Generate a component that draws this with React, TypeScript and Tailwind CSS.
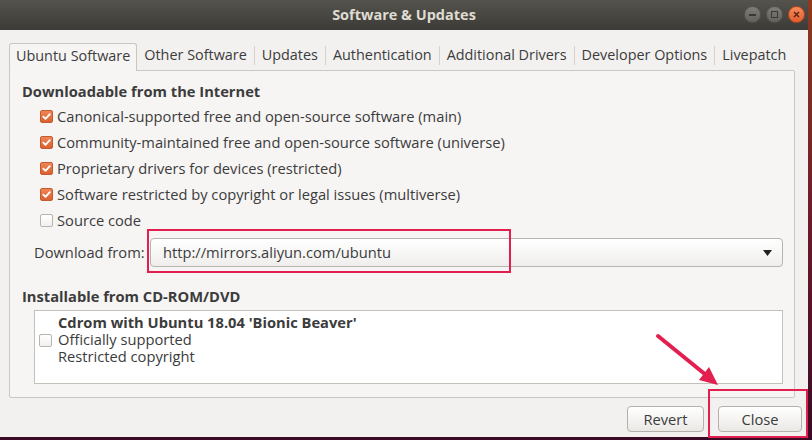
const font = "font-['Open_Sans',sans-serif]";

function CheckBox({ checked }: { checked: boolean }) {
  if (checked) {
    return (
      <span className="flex h-[13px] w-[13px] shrink-0 items-center justify-center rounded-[2px] border border-[#c55a2c] bg-gradient-to-b from-[#ee8556] to-[#d9612f]">
        <svg width="9" height="9" viewBox="0 0 9 9">
          <path d="M1.3 4.6 L3.5 6.8 L7.8 2.2" fill="none" stroke="#fff" strokeWidth="1.8" strokeLinecap="round" strokeLinejoin="round" />
        </svg>
      </span>
    );
  }
  return <span className="h-[13px] w-[13px] shrink-0 rounded-[2px] border border-[#b8b4ae] bg-gradient-to-b from-white to-[#f1f0ee]" />;
}

const sources = [
  { label: 'Canonical-supported free and open-source software (main)', checked: true },
  { label: 'Community-maintained free and open-source software (universe)', checked: true },
  { label: 'Proprietary drivers for devices (restricted)', checked: true },
  { label: 'Software restricted by copyright or legal issues (multiverse)', checked: true },
  { label: 'Source code', checked: false },
];

const tabs = ['Other Software', 'Updates', 'Authentication', 'Additional Drivers', 'Developer Options', 'Livepatch'];

export default function App() {
  return (
    <div className={`relative h-[440px] w-[812px] overflow-hidden bg-gradient-to-b from-[#8d3a1d] via-[#6c1a2a] to-[#3a0a25] text-[14.7px] text-[#3c3c3c] ${font}`}>
      <div className="flex h-[437px] w-[808px] flex-col">
        {/* title bar */}
        <div className="relative flex h-[30px] items-center justify-center bg-gradient-to-b from-[#55534d] to-[#3c3b37]">
          <span className="text-[14.5px] font-bold text-[#dfdbd2]">Software &amp; Updates</span>
          <div className="absolute right-[3px] top-[6px] flex items-center gap-[5px]">
            <span className="flex h-[17px] w-[17px] items-center justify-center rounded-full border border-[#55544f] bg-gradient-to-b from-[#7e7d78] to-[#62615c]">
              <span className="h-[2px] w-[7px] bg-[#3a3935]" />
            </span>
            <span className="flex h-[17px] w-[17px] items-center justify-center rounded-full border border-[#55544f] bg-gradient-to-b from-[#7e7d78] to-[#62615c]">
              <span className="h-[7px] w-[7px] border border-[#3a3935]" />
            </span>
            <span className="flex h-[17px] w-[17px] items-center justify-center rounded-full border border-[#b9461d] bg-gradient-to-b from-[#f58a5c] to-[#e35d2c]">
              <svg width="7" height="7" viewBox="0 0 7 7">
                <path d="M1 1 L6 6 M6 1 L1 6" stroke="#5a2210" strokeWidth="1.4" />
              </svg>
            </span>
          </div>
        </div>

        {/* body */}
        <div className="flex flex-1 flex-col bg-[#f2f1f0] pl-[9px] pr-[13px] pt-[13px]">
          {/* tabs */}
          <div className="relative z-10 flex h-[27px] items-stretch whitespace-nowrap text-[14.4px]">
            <div className="-mb-px flex shrink-0 items-center rounded-t-[3px] border border-b-0 border-[#c9c5bf] bg-[#f6f5f4] px-[6px] pb-[3px]">
              Ubuntu Software
            </div>
            {tabs.map((t, i) => (
              <div key={t} className="flex shrink-0 items-center pb-[3px]">
                {i > 0 && <span className="h-[19px] w-px bg-[#d4d1cc]" />}
                <span className="px-[7px]">{t}</span>
              </div>
            ))}
          </div>

          {/* panel */}
          <div className="flex h-[328px] flex-col rounded-[2px] border border-[#cbc7c1] bg-[#f6f5f4] pl-[12px] pr-[11px] pt-[10px]">
            <div className="h-[20px] font-bold leading-[20px]">Downloadable from the Internet</div>
            <div className="mt-[2px] flex flex-col pl-[18px]">
              {sources.map((s) => (
                <div key={s.label} className="flex h-[26px] items-center gap-[4px]">
                  <CheckBox checked={s.checked} />
                  <span>{s.label}</span>
                </div>
              ))}
            </div>
            <div className="mt-[5px] flex items-center pl-[12px]">
              <span className="w-[116px]">Download from:</span>
              <div className="flex h-[29px] flex-1 items-center justify-between rounded-[4px] border border-[#b9b5ae] bg-gradient-to-b from-white to-[#efeeec] pl-[12px] pr-[10px]">
                <span>http://mirrors.aliyun.com/ubuntu</span>
                <svg width="9" height="6" viewBox="0 0 9 6">
                  <path d="M0 0 L9 0 L4.5 6 Z" fill="#222" />
                </svg>
              </div>
            </div>
            <div className="mt-[19px] h-[20px] font-bold leading-[20px]">Installable from CD-ROM/DVD</div>
            <div className="ml-[12px] mt-[4px] flex h-[74px] items-start border border-[#c4c0ba] bg-white pl-[4px] pt-[3px]">
              <div className="flex h-[52px] items-center">
                <CheckBox checked={false} />
              </div>
              <div className="ml-[6px] flex flex-col leading-[17px]">
                <span className="font-bold">Cdrom with Ubuntu 18.04 'Bionic Beaver'</span>
                <span>Officially supported</span>
                <span>Restricted copyright</span>
              </div>
            </div>
          </div>

          {/* buttons */}
          <div className="mt-[8px] flex justify-end gap-[14px]">
            <button className="h-[26px] w-[77px] rounded-[4px] border border-[#b5b0a9] bg-gradient-to-b from-white to-[#ebe9e6] text-[#3c3c3c]">
              Revert
            </button>
            <button className="-mr-[7px] h-[26px] w-[84px] rounded-[4px] border border-[#b5b0a9] bg-gradient-to-b from-white to-[#ebe9e6] text-[#3c3c3c]">
              Close
            </button>
          </div>
        </div>
      </div>

      {/* annotations */}
      <div className="absolute left-[147px] top-[229px] h-[44px] w-[364px] border-2 border-[#e21f4e]" />
      <div className="absolute left-[708px] top-[389px] h-[49px] w-[100px] border-2 border-[#e21f4e]" />
      <svg className="absolute left-0 top-0" width="812" height="440" viewBox="0 0 812 440">
        <line x1="658" y1="336" x2="706" y2="375" stroke="#e21f4e" strokeWidth="4" strokeLinecap="round" />
        <polygon points="718,385 699,380 709,367" fill="#e21f4e" />
      </svg>
    </div>
  );
}
